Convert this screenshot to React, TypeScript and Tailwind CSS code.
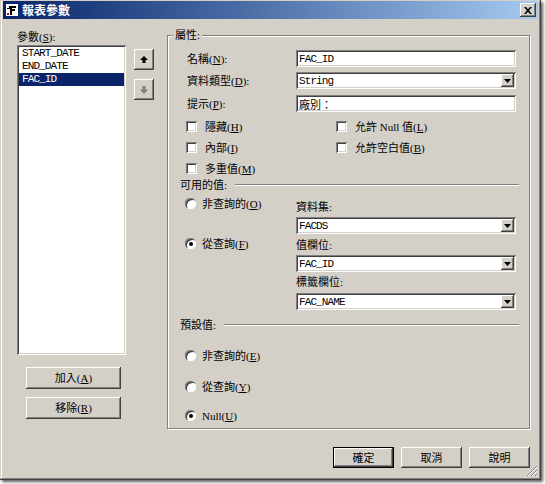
import React from 'react';

const raised =
  'shadow-[inset_-1px_-1px_0_#404040,inset_1px_1px_0_#ffffff,inset_-2px_-2px_0_#808080,inset_2px_2px_0_#d4d0c8]';
const sunken =
  'shadow-[inset_1px_1px_0_#808080,inset_-1px_-1px_0_#ffffff,inset_2px_2px_0_#404040,inset_-2px_-2px_0_#d4d0c8]';
const ui = "font-['Liberation_Serif','Noto_Sans_CJK_TC',serif] text-[11px] leading-[12px] text-black";
const mono = "font-['Liberation_Mono','Noto_Sans_CJK_TC',monospace] text-[11px] tracking-[-0.9px]";

const Acc = ({ text, k, colon = false }: { text: string; k?: string; colon?: boolean }) => (
  <span className="whitespace-nowrap">
    {text}
    {k && (
      <>
        (<u>{k}</u>)
      </>
    )}
    {colon && ':'}
  </span>
);

const Checkbox = ({ text, k }: { text: string; k: string }) => (
  <div className="flex items-center h-[13px]">
    <span className={`w-[11px] h-[11px] bg-white ${sunken}`} />
    <span className="ml-[8px]">
      <Acc text={text} k={k} />
    </span>
  </div>
);

const Radio = ({ text, k, checked = false }: { text: string; k: string; checked?: boolean }) => (
  <div className="flex items-center h-[13px]">
    <span className="relative w-[11px] h-[11px] rounded-full bg-white shadow-[inset_1px_1px_0_#808080,inset_2px_2px_0_#404040,inset_-1px_-1px_0_#ffffff] flex items-center justify-center">
      {checked && <span className="w-[4px] h-[4px] rounded-full bg-black" />}
    </span>
    <span className="ml-[6px]">
      <Acc text={text} k={k} />
    </span>
  </div>
);

const Arrow = () => (
  <svg width="7" height="4" viewBox="0 0 7 4">
    <path d="M0 0h7L3.5 4z" fill="#000" />
  </svg>
);

const TextBox = ({ value }: { value: string }) => (
  <div className={`h-[17px] w-[220px] bg-white ${sunken} flex items-center pl-[3px] ${mono}`}>{value}</div>
);

const Select = ({ value }: { value: string }) => (
  <div className={`h-[17px] w-[220px] bg-white ${sunken} flex items-center`}>
    <span className={`pl-[3px] ${mono}`}>{value}</span>
    <span className={`ml-auto mr-[2px] w-[13px] h-[13px] bg-[#d4d0c8] ${raised} flex items-center justify-center`}>
      <Arrow />
    </span>
  </div>
);

const Field = ({ label, children, className = '' }: { label: React.ReactNode; children: React.ReactNode; className?: string }) => (
  <div className={`flex items-center pl-[7px] ${className}`}>
    <span className="w-[109px]">{label}</span>
    {children}
  </div>
);

const Separator = ({ label, className = '' }: { label: string; className?: string }) => (
  <div className={`flex items-center h-[12px] ${className}`}>
    <span>{label}:</span>
    <span className="flex-1 ml-[8px] mr-[10px] h-[2px] border-t border-[#808080] border-b border-b-white" />
  </div>
);

const Button = ({ children, className = '', isDefault = false }: { children: React.ReactNode; className?: string; isDefault?: boolean }) => (
  <div
    className={`flex items-center justify-center bg-[#d4d0c8] ${
      isDefault
        ? 'shadow-[inset_0_0_0_1px_#000,inset_-2px_-2px_0_#404040,inset_2px_2px_0_#ffffff,inset_-3px_-3px_0_#808080]'
        : raised
    } ${className}`}
  >
    {children}
  </div>
);

const MoveButton = ({ up }: { up: boolean }) => (
  <div className={`w-[20px] h-[21px] bg-[#d4d0c8] ${raised} flex items-center justify-center`}>
    <svg width="8" height="8" viewBox="0 0 8 8">
      {up ? (
        <path d="M4 0L8 4H5.5V7H2.5V4H0z" fill="#000" />
      ) : (
        <path d="M2.5 0H5.5V3.5H8L4 8L0 3.5H2.5z" fill="#808080" />
      )}
    </svg>
  </div>
);

export default function App() {
  return (
    <div className={`w-[545px] h-[484px] bg-white ${ui}`}>
      <div className="relative w-[541px] h-[480px] bg-[#d4d0c8] shadow-[inset_-1px_-1px_0_#404040,inset_1px_1px_0_#d4d0c8,inset_-2px_-2px_0_#808080,inset_2px_2px_0_#ffffff,2px_2px_3px_rgba(0,0,0,0.65)] flex flex-col">
        {/* title bar */}
        <div className="mx-[3px] mt-[1px] h-[18px] bg-linear-to-r from-[#0a246a] to-[#a6caf0] flex items-center">
          <svg width="12" height="12" viewBox="0 0 12 12" className="ml-[3px]">
            <rect x="0" y="0" width="12" height="12" fill="#fff" />
            <path d="M3 2h7v2H6v1h3v2H6v4H4V5H1V4h2z" fill="#000" />
            <rect x="1" y="9" width="2" height="2" fill="#c00" />
          </svg>
          <span className="ml-[4px] text-white font-bold text-[12px] font-['Noto_Sans_CJK_TC',sans-serif] leading-[12px]">
            報表參數
          </span>
          <div className={`ml-auto mr-[2px] w-[16px] h-[14px] bg-[#d4d0c8] ${raised} flex items-center justify-center`}>
            <svg width="8" height="7" viewBox="0 0 8 7">
              <path d="M0 0h2l2 2.2L6 0h2L5 3.5 8 7H6L4 4.8 2 7H0l3-3.5z" fill="#000" />
            </svg>
          </div>
        </div>

        {/* body */}
        <div className="flex items-start pl-[17px] mt-[12px]">
          {/* left column */}
          <div className="flex flex-col w-[137px]">
            <span className="h-[12px]">
              參數(<u>S</u>):
            </span>
            <div className="flex items-start mt-[2px]">
              <div className={`w-[109px] h-[310px] bg-white ${sunken} p-[2px] ${mono}`}>
                <div className="h-[13px] leading-[13px] pl-[3px]">START_DATE</div>
                <div className="h-[13px] leading-[13px] pl-[3px]">END_DATE</div>
                <div className="h-[13px] leading-[13px] pl-[3px] bg-[#0a246a] text-white">FAC_ID</div>
              </div>
              <div className="flex flex-col gap-[9px] ml-[8px] mt-[4px]">
                <MoveButton up />
                <MoveButton up={false} />
              </div>
            </div>
            <Button className="ml-[9px] mt-[12px] w-[95px] h-[22px]">
              <Acc text="加入" k="A" />
            </Button>
            <Button className="ml-[9px] mt-[8px] w-[95px] h-[22px]">
              <Acc text="移除" k="R" />
            </Button>
          </div>

          {/* properties group */}
          <div className="relative ml-[13px] mt-[4px] w-[363px] h-[394px] border border-[#808080] shadow-[1px_1px_0_#ffffff,inset_1px_1px_0_#ffffff] flex flex-col pl-[12px]">
            <span className="absolute left-[5px] top-[-7px] px-[2px] bg-[#d4d0c8]">屬性:</span>

            <Field className="mt-[14px]" label={<Acc text="名稱" k="N" colon />}>
              <TextBox value="FAC_ID" />
            </Field>
            <Field className="mt-[5px]" label={<Acc text="資料類型" k="D" colon />}>
              <Select value="String" />
            </Field>
            <Field className="mt-[6px]" label={<Acc text="提示" k="P" colon />}>
              <div className={`h-[17px] w-[220px] bg-white ${sunken} flex items-center pl-[3px] font-['Noto_Sans_CJK_TC',sans-serif] text-[11px]`}>
                廠別：
              </div>
            </Field>

            <div className="grid grid-cols-[150px_1fr] gap-y-[8px] mt-[8px] pl-[6px]">
              <Checkbox text="隱藏" k="H" />
              <Checkbox text="允許 Null 值" k="L" />
              <Checkbox text="內部" k="I" />
              <Checkbox text="允許空白值" k="B" />
              <Checkbox text="多重值" k="M" />
            </div>

            <Separator label="可用的值" className="mt-[4px]" />

            <div className="flex">
              <div className="w-[116px] pl-[5px] flex flex-col">
                <div className="mt-[6px]">
                  <Radio text="非查詢的" k="O" />
                </div>
                <div className="mt-[27px]">
                  <Radio text="從查詢" k="F" checked />
                </div>
              </div>
              <div className="flex flex-col">
                <span className="mt-[10px] h-[12px]">資料集:</span>
                <div className="mt-[4px]">
                  <Select value="FACDS" />
                </div>
                <span className="mt-[5px] h-[12px]">值欄位:</span>
                <div className="mt-[4px]">
                  <Select value="FAC_ID" />
                </div>
                <span className="mt-[4px] h-[12px]">標籤欄位:</span>
                <div className="mt-[5px]">
                  <Select value="FAC_NAME" />
                </div>
              </div>
            </div>

            <Separator label="預設值" className="mt-[9px]" />

            <div className="flex flex-col pl-[5px]">
              <div className="mt-[18px]">
                <Radio text="非查詢的" k="E" />
              </div>
              <div className="mt-[18px]">
                <Radio text="從查詢" k="Y" />
              </div>
              <div className="mt-[16px]">
                <Radio text="Null" k="U" checked />
              </div>
            </div>
          </div>
        </div>

        {/* dialog buttons */}
        <div className="flex gap-[7px] pl-[333px] mt-[18px]">
          <Button isDefault className="w-[61px] h-[21px]">確定</Button>
          <Button className="w-[61px] h-[21px]">取消</Button>
          <Button className="w-[61px] h-[21px]">說明</Button>
        </div>

        {/* size grip */}
        <svg width="12" height="12" viewBox="0 0 12 12" className="absolute right-[3px] bottom-[3px]">
          <path d="M11 1L1 11M11 5L5 11M11 9L9 11" stroke="#808080" strokeWidth="1" />
          <path d="M11 2L2 11M11 6L6 11M11 10L10 11" stroke="#ffffff" strokeWidth="1" />
        </svg>
      </div>
    </div>
  );
}
